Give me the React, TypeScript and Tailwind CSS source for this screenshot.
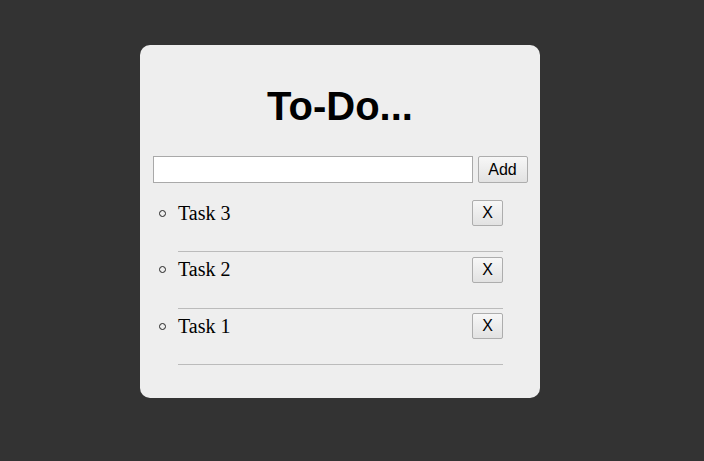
const tasks = ['Task 3', 'Task 2', 'Task 1']

export default function App() {
  return (
    <div className="min-h-screen bg-[#333333] pt-[45px]">
      <div className="ml-[140px] w-[400px] rounded-[10px] bg-[#eeeeee] pt-[38px] pb-[33px]">
        <h1 className="text-center font-['Liberation_Sans',Arial,sans-serif] text-[40px] font-bold leading-[46px] text-black">
          To-Do...
        </h1>

        <form className="mt-[27px] flex justify-center gap-[5px]" onSubmit={(e) => e.preventDefault()}>
          <input
            type="text"
            className="h-[27px] w-[320px] border border-[#a9a9a9] bg-white px-1 font-['Liberation_Sans',Arial,sans-serif] text-[16px] outline-none"
          />
          <button
            type="submit"
            className="h-[27px] w-[50px] rounded-[2px] border border-[#adadad] bg-gradient-to-b from-[#f7f7f7] to-[#e2e2e2] font-['Liberation_Sans',Arial,sans-serif] text-[16px] text-black"
          >
            Add
          </button>
        </form>

        <ul className="mt-[17px] ml-[38px] mr-[37px] font-['Liberation_Serif','Times_New_Roman',serif] text-[20px] text-black">
          {tasks.map((task, i) => (
            <li key={task} className={i > 0 ? 'pt-[4.5px]' : ''}>
              <div className="flex h-[26px] items-center">
                {/* circle bullet */}
                <span className="-ml-[19px] mr-[12px] h-[7px] w-[7px] shrink-0 rounded-full border border-[#222]" />
                <span className="flex-1 leading-[23px]">{task}</span>
                <button className="h-[26px] w-[31px] rounded-[2px] border border-[#adadad] bg-gradient-to-b from-[#f7f7f7] to-[#e2e2e2] font-['Liberation_Sans',Arial,sans-serif] text-[16px] leading-none text-black">
                  X
                </button>
              </div>
              <hr className="mt-[25px] border-t border-[#bbbbbb]" />
            </li>
          ))}
        </ul>
      </div>
    </div>
  )
}
